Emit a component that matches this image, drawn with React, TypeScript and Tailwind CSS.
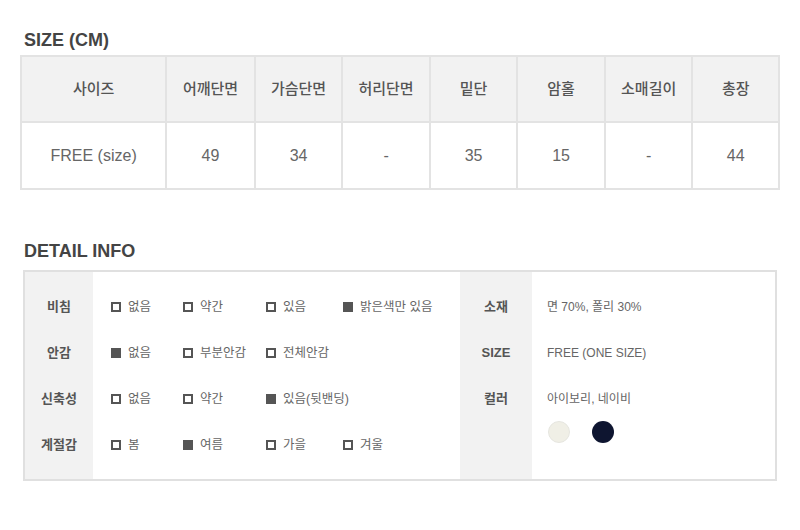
import React from 'react';

const font = { fontFamily: '"Liberation Sans", "Noto Sans CJK KR", sans-serif' };

const sizeHead = ['사이즈', '어깨단면', '가슴단면', '허리단면', '밑단', '암홀', '소매길이', '총장'];
const sizeBody = ['FREE (size)', '49', '34', '-', '35', '15', '-', '44'];
const colWidths = ['w-[144px]', 'w-[89px]', 'w-[88px]', 'w-[88px]', 'w-[88px]', 'w-[88px]', 'w-[88px]', 'w-[87px]'];

interface Opt {
  label: string;
  on?: boolean;
}

const detailRows: { title: string; options: Opt[] }[] = [
  { title: '비침', options: [{ label: '없음' }, { label: '약간' }, { label: '있음' }, { label: '밝은색만 있음', on: true }] },
  { title: '안감', options: [{ label: '없음', on: true }, { label: '부분안감' }, { label: '전체안감' }] },
  { title: '신축성', options: [{ label: '없음' }, { label: '약간' }, { label: '있음(뒷밴딩)', on: true }] },
  { title: '계절감', options: [{ label: '봄' }, { label: '여름', on: true }, { label: '가을' }, { label: '겨울' }] },
];

const Check = ({ on }: { on?: boolean }) => (
  <span
    className={
      on
        ? 'inline-block shrink-0 w-[10px] h-[10px] bg-[#555]'
        : 'inline-block shrink-0 w-[10px] h-[10px] border-2 border-[#555] bg-white'
    }
  />
);

export default function App() {
  return (
    <div className="w-[800px] h-[530px] bg-white text-[#555]" style={font}>
      <div className="pl-[24px] pt-[29px] text-[18px] font-bold text-[#444] leading-[22px]">SIZE (CM)</div>
      <div className="ml-[20px] mt-[4px] w-[760px] border-2 border-[#e3e3e3] flex flex-col">
        <div className="flex h-[66px] bg-[#f2f2f2] border-b-2 border-[#e3e3e3]">
          {sizeHead.map((h, i) => (
            <div
              key={h}
              className={`${colWidths[i]} flex items-center justify-center text-[15px] font-medium text-[#555] ${i > 0 ? 'border-l-2 border-[#e3e3e3]' : ''}`}
            >
              {h}
            </div>
          ))}
        </div>
        <div className="flex h-[65px]">
          {sizeBody.map((b, i) => (
            <div
              key={i}
              className={`${colWidths[i]} flex items-center justify-center text-[16px] text-[#666] ${i > 0 ? 'border-l-2 border-[#e3e3e3]' : ''}`}
            >
              {b}
            </div>
          ))}
        </div>
      </div>

      <div className="pl-[24px] pt-[50px] text-[18px] font-bold text-[#444] leading-[22px]">DETAIL INFO</div>
      <div className="ml-[23px] mt-[8px] w-[754px] h-[211px] border-2 border-[#e0e0e0] flex">
        <div className="w-[68px] bg-[#f2f2f2] flex flex-col pt-[12px]">
          {detailRows.map((r) => (
            <div key={r.title} className="h-[46px] flex items-center justify-center text-[13px] font-bold text-[#555]">
              {r.title}
            </div>
          ))}
        </div>
        <div className="w-[367px] flex flex-col pt-[12px] pl-[18px]">
          {detailRows.map((r) => (
            <div key={r.title} className="h-[46px] grid grid-cols-[72px_83px_77px_1fr] items-center">
              {r.options.map((o) => (
                <div key={o.label} className="flex items-center gap-[7px] text-[12.5px] text-[#666] whitespace-nowrap">
                  <Check on={o.on} />
                  <span>{o.label}</span>
                </div>
              ))}
            </div>
          ))}
        </div>
        <div className="w-[72px] bg-[#f2f2f2] flex flex-col pt-[12px]">
          {['소재', 'SIZE', '컬러'].map((t) => (
            <div key={t} className="h-[46px] flex items-center justify-center text-[13px] font-bold text-[#555]">
              {t}
            </div>
          ))}
        </div>
        <div className="flex-1 flex flex-col pt-[12px] pl-[15px] text-[12px] text-[#666]">
          <div className="h-[46px] flex items-center">면 70%, 폴리 30%</div>
          <div className="h-[46px] flex items-center">FREE (ONE SIZE)</div>
          <div className="h-[46px] flex items-center">아이보리, 네이비</div>
          <div className="flex gap-[22px] mt-[-1px] pl-[1px]">
            <span className="w-[22px] h-[22px] rounded-full bg-[#f0efe6] border border-[#e6e6e0]" />
            <span className="w-[22px] h-[22px] rounded-full bg-[#0e1530]" />
          </div>
        </div>
      </div>
    </div>
  );
}
